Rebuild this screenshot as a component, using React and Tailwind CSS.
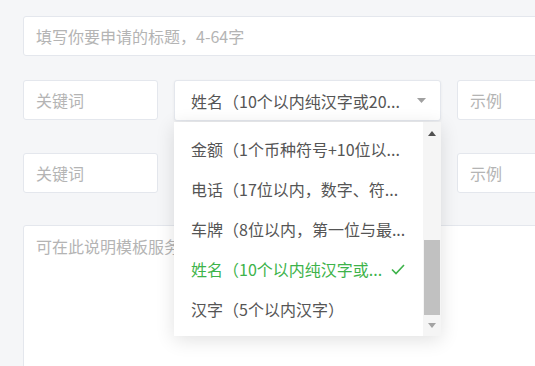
import React from 'react';

const options = [
  { label: '金额（1个币种符号+10位以...' },
  { label: '电话（17位以内，数字、符...' },
  { label: '车牌（8位以内，第一位与最...' },
  { label: '姓名（10个以内纯汉字或...', active: true },
  { label: '汉字（5个以内汉字）' },
];

const Input = ({ placeholder, className = '' }) => (
  <div
    className={`h-10 flex items-center px-3 bg-white border border-[#e4e7ed] rounded-[3px] text-[16px] text-[#b4b4b4] whitespace-nowrap ${className}`}
  >
    {placeholder}
  </div>
);

const App = () => {
  return (
    <div
      className="w-[535px] h-[366px] overflow-hidden bg-[#f5f6f8] pl-[23px] pt-4"
      style={{ fontFamily: '"Noto Sans CJK SC", "Noto Sans", sans-serif' }}
    >
      <div className="w-[600px] flex flex-col">
        <Input placeholder="填写你要申请的标题，4-64字" />

        <div className="flex mt-6">
          <Input placeholder="关键词" className="w-[135px]" />
          <div className="relative ml-4 w-[267px]">
            <div className="h-[41px] flex items-center pl-[16px] pr-3 bg-white border border-[#e4e7ed] rounded-[3px] shadow-[0_1px_3px_rgba(0,0,0,0.06)] text-[16px] text-[#555]">
              <span className="flex-1 whitespace-nowrap">姓名（10个以内纯汉字或20...</span>
              <svg width="9" height="5" viewBox="0 0 9 5" className="mr-[2px]">
                <path d="M0 0h9L4.5 5z" fill="#a0a0a0" />
              </svg>
            </div>
            <div className="absolute left-0 top-[42px] w-[267px] h-[214px] bg-white shadow-[0_4px_18px_rgba(0,0,0,0.12)] flex z-10">
              <div className="flex-1 py-[7px]">
                {options.map((o) => (
                  <div
                    key={o.label}
                    className={`h-10 flex items-center pl-[17px] pr-[18px] text-[16px] whitespace-nowrap ${
                      o.active ? 'text-[#3db34a]' : 'text-[#555]'
                    }`}
                  >
                    <span className="flex-1">{o.label}</span>
                    {o.active && (
                      <svg width="14" height="11" viewBox="0 0 14 11">
                        <path d="M1 5.5l4 4L13 1" fill="none" stroke="#3db34a" strokeWidth="1.6" />
                      </svg>
                    )}
                  </div>
                ))}
              </div>
              <div className="w-[19px] bg-[#f5f5f5] flex flex-col items-center">
                <div className="h-[22px] flex items-center justify-center">
                  <svg width="8" height="5" viewBox="0 0 8 5">
                    <path d="M0 5h8L4 0z" fill="#505050" />
                  </svg>
                </div>
                <div className="h-[96px]" />
                <div className="w-[16px] h-[75px] bg-[#c1c1c1]" />
                <div className="flex-1 flex items-center justify-center">
                  <svg width="8" height="5" viewBox="0 0 8 5">
                    <path d="M0 0h8L4 5z" fill="#a3a3a3" />
                  </svg>
                </div>
              </div>
            </div>
          </div>
          <Input placeholder="示例" className="ml-4 flex-1" />
        </div>

        <div className="flex mt-8">
          <Input placeholder="关键词" className="w-[135px]" />
          <div className="ml-4 w-[267px]" />
          <Input placeholder="示例" className="ml-4 flex-1" />
        </div>

        <div className="mt-8 h-[200px] bg-white border border-[#e4e7ed] rounded-[3px] px-3 pt-2 text-[16px] text-[#b4b4b4] whitespace-nowrap">
          可在此说明模板服务
        </div>
      </div>
    </div>
  );
};

export default App;
